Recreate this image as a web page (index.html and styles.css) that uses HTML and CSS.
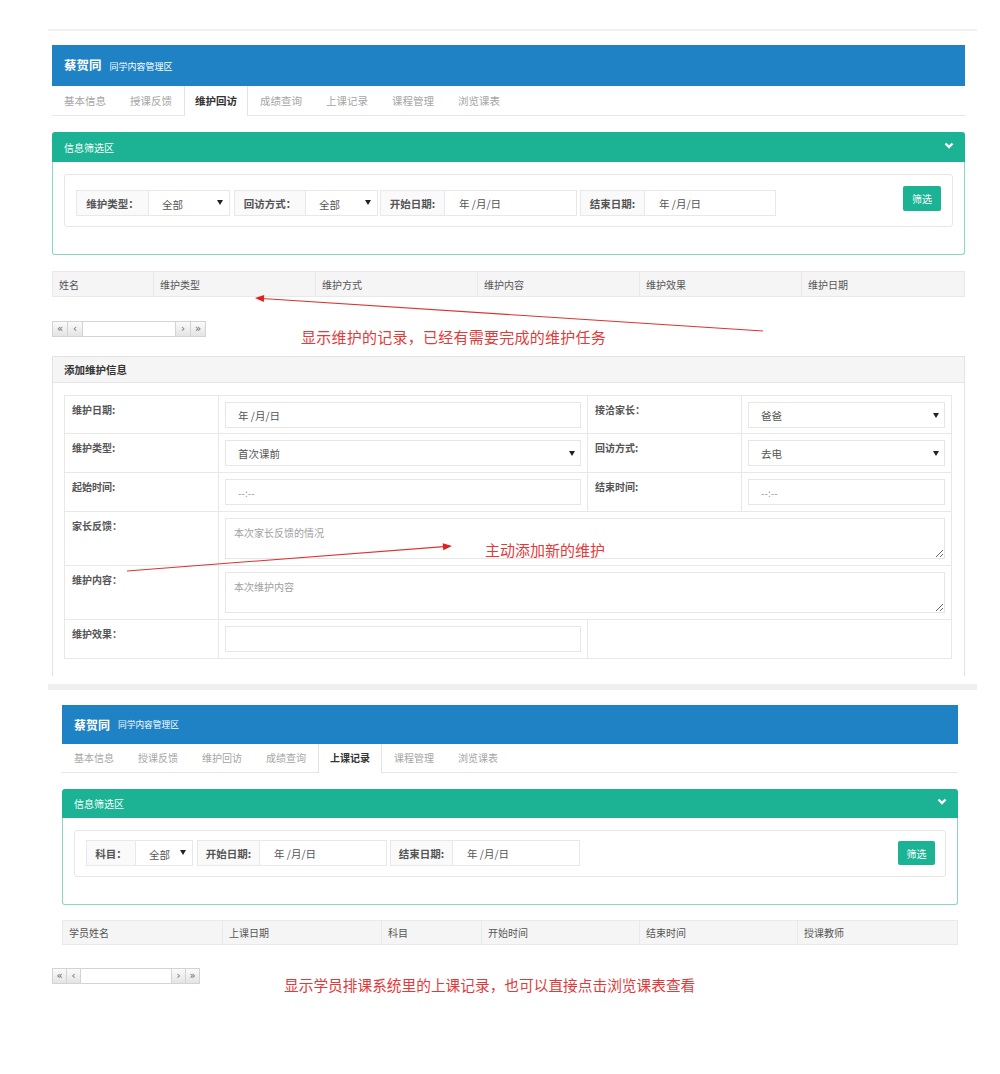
FILE: index.html
```html
<!DOCTYPE html>
<html lang="zh-CN">
<head>
<meta charset="utf-8">
<title>维护回访</title>
<link rel="stylesheet" href="styles.css">
</head>
<body>
<div class="rule"></div>

<section class="shot shot1">
  <div class="app-header"><span class="app-title">蔡贺同</span><span class="app-sub">同学内容管理区</span></div>
  <nav class="tabs">
    <span class="tab">基本信息</span>
    <span class="tab">授课反馈</span>
    <span class="tab active">维护回访</span>
    <span class="tab">成绩查询</span>
    <span class="tab">上课记录</span>
    <span class="tab">课程管理</span>
    <span class="tab">浏览课表</span>
  </nav>

  <div class="gpanel">
    <div class="gpanel-head"><span>信息筛选区</span>
      <svg class="chev" width="10" height="7" viewBox="0 0 10 7"><polyline points="1.5,1.5 5,5 8.5,1.5" fill="none" stroke="#fff" stroke-width="2.4"/></svg>
    </div>
    <div class="gpanel-body">
      <div class="fbox">
        <div class="fgroups">
          <div class="fgroup"><div class="flabel w73">维护类型：</div><div class="fctrl sel w81"><span>全部</span><svg class="tri" width="6" height="5" viewBox="0 0 6 5"><polygon points="0,0 6,0 3,5" fill="#222"/></svg></div></div>
          <div class="fgroup ml4"><div class="flabel w72">回访方式：</div><div class="fctrl sel w72"><span>全部</span><svg class="tri" width="6" height="5" viewBox="0 0 6 5"><polygon points="0,0 6,0 3,5" fill="#222"/></svg></div></div>
          <div class="fgroup ml2"><div class="flabel w65">开始日期:</div><div class="fctrl date w132">年 /月/日</div></div>
          <div class="fgroup ml3"><div class="flabel w65">结束日期:</div><div class="fctrl date w131">年 /月/日</div></div>
        </div>
        <button class="btn-green b1">筛选</button>
      </div>
    </div>
  </div>

  <div class="thead t1">
    <div>姓名</div><div>维护类型</div><div>维护方式</div><div>维护内容</div><div>维护效果</div><div>维护日期</div>
  </div>

  <div class="pager p1">
    <span class="pg">«</span><span class="pg">‹</span><span class="pg-mid"></span><span class="pg">›</span><span class="pg">»</span>
  </div>

  <div class="apanel">
    <div class="apanel-head">添加维护信息</div>
    <div class="apanel-body">
      <div class="ftable">
        <div class="fl">维护日期:</div>
        <div class="fc"><div class="field">年 /月/日</div></div>
        <div class="fl">接洽家长：</div>
        <div class="fc"><div class="field sel2"><span>爸爸</span><svg width="6" height="5" viewBox="0 0 6 5"><polygon points="0,0 6,0 3,5" fill="#222"/></svg></div></div>

        <div class="fl">维护类型:</div>
        <div class="fc"><div class="field sel2"><span>首次课前</span><svg width="6" height="5" viewBox="0 0 6 5"><polygon points="0,0 6,0 3,5" fill="#222"/></svg></div></div>
        <div class="fl">回访方式:</div>
        <div class="fc"><div class="field sel2"><span>去电</span><svg width="6" height="5" viewBox="0 0 6 5"><polygon points="0,0 6,0 3,5" fill="#222"/></svg></div></div>

        <div class="fl">起始时间:</div>
        <div class="fc"><div class="field time">--:--</div></div>
        <div class="fl">结束时间:</div>
        <div class="fc"><div class="field time">--:--</div></div>

        <div class="fl">家长反馈：</div>
        <div class="fc span3"><textarea class="ta" readonly placeholder="本次家长反馈的情况"></textarea></div>

        <div class="fl">维护内容：</div>
        <div class="fc span3"><textarea class="ta" readonly placeholder="本次维护内容"></textarea></div>

        <div class="fl">维护效果：</div>
        <div class="fc"><div class="field"></div></div>
        <div class="fc span2"></div>
      </div>
    </div>
  </div>
</section>

<div class="band"></div>

<section class="shot shot2">
  <div class="app-header h2"><span class="app-title">蔡贺同</span><span class="app-sub">同学内容管理区</span></div>
  <nav class="tabs tabs2">
    <span class="tab">基本信息</span>
    <span class="tab">授课反馈</span>
    <span class="tab">维护回访</span>
    <span class="tab">成绩查询</span>
    <span class="tab active">上课记录</span>
    <span class="tab">课程管理</span>
    <span class="tab">浏览课表</span>
  </nav>

  <div class="gpanel gp2">
    <div class="gpanel-head"><span>信息筛选区</span>
      <svg class="chev" width="10" height="7" viewBox="0 0 10 7"><polyline points="1.5,1.5 5,5 8.5,1.5" fill="none" stroke="#fff" stroke-width="2.4"/></svg>
    </div>
    <div class="gpanel-body">
      <div class="fbox fbox2">
        <div class="fgroups">
          <div class="fgroup"><div class="flabel w50">科目：</div><div class="fctrl sel w57"><span>全部</span><svg class="tri" width="6" height="5" viewBox="0 0 6 5"><polygon points="0,0 6,0 3,5" fill="#222"/></svg></div></div>
          <div class="fgroup ml4"><div class="flabel w63">开始日期:</div><div class="fctrl date w127">年 /月/日</div></div>
          <div class="fgroup ml3"><div class="flabel w63">结束日期:</div><div class="fctrl date w127">年 /月/日</div></div>
        </div>
        <button class="btn-green b2">筛选</button>
      </div>
    </div>
  </div>

  <div class="thead t2">
    <div>学员姓名</div><div>上课日期</div><div>科目</div><div>开始时间</div><div>结束时间</div><div>授课教师</div>
  </div>

  <div class="pager p2">
    <span class="pg">«</span><span class="pg">‹</span><span class="pg-mid"></span><span class="pg">›</span><span class="pg">»</span>
  </div>
</section>

<svg class="arrows" width="1000" height="1074" viewBox="0 0 1000 1074">
  <line x1="763" y1="331" x2="262" y2="298.5" stroke="#d9342f" stroke-width="1.1"/>
  <polygon points="255,298 264.2,295.1 263.8,302.1" fill="#e02020"/>
  <line x1="127" y1="571" x2="444" y2="546.6" stroke="#d9342f" stroke-width="1.1"/>
  <polygon points="452,546 443.3,550.2 442.7,543.2" fill="#e02020"/>
</svg>
<div class="note n1">显示维护的记录，已经有需要完成的维护任务</div>
<div class="note n2">主动添加新的维护</div>
<div class="note n3">显示学员排课系统里的上课记录，也可以直接点击浏览课表查看</div>
</body>
</html>
```

FILE: styles.css
```css
* { box-sizing: border-box; }

html, body {
  margin: 0;
  padding: 0;
}

body {
  position: relative;
  width: 1000px;
  height: 1074px;
  overflow: hidden;
  background: #fff;
  font-family: "Noto Sans CJK SC", "Noto Sans", sans-serif;
  color: #555;
}

.rule {
  margin: 29px 23px 0 48px;
  height: 2px;
  background: #f1f1f1;
}

.shot1 {
  margin: 14px 35px 0 52px;
}

.shot2 {
  margin: 15px 42px 0 62px;
}

/* header */
.app-header {
  height: 41px;
  background: #1e82c5;
  display: flex;
  align-items: center;
  padding-left: 12px;
  gap: 8px;
}
.app-header.h2 {
  height: 39px;
}
.app-title {
  color: #fff;
  font-weight: bold;
  font-size: 12.5px;
  line-height: 1;
}
.app-sub {
  color: #fff;
  font-size: 9px;
  line-height: 1;
  padding-top: 1px;
}
.h2 .app-title { font-size: 12px; }
.h2 .app-sub { font-size: 8.7px; }

/* tabs */
.tabs {
  display: flex;
  height: 30px;
  border-bottom: 1px solid #e6e6e6;
}
.tab {
  padding: 0 12px;
  font-size: 10.5px;
  line-height: 29px;
  color: #a5a5a5;
  white-space: nowrap;
}
.tab.active {
  color: #333;
  font-weight: bold;
  background: #fff;
  border-left: 1px solid #e3e3e3;
  border-right: 1px solid #e3e3e3;
  height: 30px;
  margin-bottom: -1px;
  padding: 0 10px;
}
.tabs2 {
  height: 29px;
}
.tabs2 .tab {
  font-size: 10px;
  line-height: 28px;
  padding: 0 12px;
}
.tabs2 .tab.active {
  height: 29px;
  padding: 0 11px;
}

/* green filter panel */
.gpanel {
  margin-top: 16px;
}
.gpanel-head {
  height: 30px;
  background: #1bb394;
  border-radius: 3px 3px 0 0;
  display: flex;
  align-items: center;
  justify-content: space-between;
  padding: 0 12px;
  color: #fff;
  font-size: 10px;
}
.gp2 .gpanel-head {
  height: 29px;
}
.chev {
  margin-right: -1px;
  margin-top: -4px;
}
.gpanel-body {
  border: 1px solid #8ad6c5;
  border-top: none;
  border-radius: 0 0 3px 3px;
  padding: 12px 11px 27px;
}
.fbox {
  border: 1px solid #e6e6e6;
  border-radius: 3px;
  padding: 15px 11px 10px;
  display: flex;
  justify-content: space-between;
  align-items: flex-start;
}
.fgroups {
  display: flex;
}
.fgroup {
  display: flex;
  height: 26px;
}
.ml2 { margin-left: 2px; }
.ml3 { margin-left: 3px; }
.ml4 { margin-left: 4px; }

.flabel {
  border: 1px solid #e8e8e8;
  background: #fafafa;
  font-weight: bold;
  font-size: 10.5px;
  color: #555;
  display: flex;
  align-items: center;
  justify-content: center;
  white-space: nowrap;
}
.fctrl {
  border: 1px solid #e8e8e8;
  border-left: none;
  background: #fff;
  display: flex;
  align-items: center;
  font-size: 10.5px;
  color: #555;
  white-space: nowrap;
}
.fctrl.sel {
  justify-content: space-between;
  padding: 2px 6px 0 13px;
}
.fctrl.sel .tri { margin-top: -3px; }
.fctrl.date {
  padding: 1px 0 0 14px;
}

.w50 { width: 50px; }
.w57 { width: 57px; }
.w63 { width: 63px; }
.w65 { width: 65px; }
.w72 { width: 72px; }
.w73 { width: 73px; }
.w81 { width: 81px; }
.w127 { width: 127px; }
.w131 { width: 131px; }
.w132 { width: 132px; }

.btn-green {
  border: none;
  background: #1bb394;
  color: #fff;
  font-family: inherit;
  font-size: 10px;
  border-radius: 2px;
  padding: 0;
}
.b1 {
  width: 38px;
  height: 25px;
  margin-top: -4px;
}
.fbox2 {
  padding: 9px 10px 10px 11px;
}
.b2 {
  width: 37px;
  height: 24px;
  margin-top: 1px;
}

/* table header */
.thead {
  display: grid;
  background: #f5f5f5;
  border: 1px solid #e9e9e9;
  font-size: 10px;
  color: #555;
}
.thead > div {
  padding-left: 6px;
  display: flex;
  align-items: center;
  white-space: nowrap;
}
.thead > div + div {
  border-left: 1px solid #e9e9e9;
}
.t1 {
  margin-top: 16px;
  height: 26px;
  grid-template-columns: 100px 162px 162px 162px 162px 1fr;
}
.t2 {
  margin-top: 15px;
  height: 25px;
  grid-template-columns: 159px 159px 100px 158px 158px 1fr;
}

/* pager */
.pager {
  display: flex;
  height: 16px;
}
.p1 {
  margin-top: 24px;
  width: 154px;
}
.p2 {
  margin-top: 23px;
  margin-left: -10px;
  width: 148px;
}
.pg {
  width: 16px;
  flex: none;
  border: 1px solid #d3d3d3;
  background: linear-gradient(#fbfbfb, #e4e4e4);
  color: #666;
  font-size: 10px;
  line-height: 13px;
  text-align: center;
  font-family: "DejaVu Sans", sans-serif;
}
.pg + .pg,
.pg-mid + .pg {
  margin-left: -1px;
}
.p2 .pg { width: 15px; }
.pg-mid {
  flex: 1;
  border-top: 1px solid #d3d3d3;
  border-bottom: 1px solid #d3d3d3;
  background: #fff;
}

/* add panel */
.apanel {
  margin-top: 19px;
  border: 1px solid #e3e3e3;
  border-bottom: none;
}
.apanel-head {
  height: 26px;
  background: #f5f5f5;
  border-bottom: 1px solid #e6e6e6;
  padding-left: 11px;
  display: flex;
  align-items: center;
  font-size: 10.5px;
  font-weight: bold;
  color: #333;
}
.apanel-body {
  padding: 12px 12px 17px 11px;
}
.ftable {
  display: grid;
  grid-template-columns: 154px 369px 154px 210px;
  grid-template-rows: 38px 39px 39px 54px 54px 39px;
  width: 888px;
  border-top: 1px solid #e8e8e8;
  border-left: 1px solid #e8e8e8;
}
.fl,
.fc {
  border-right: 1px solid #e8e8e8;
  border-bottom: 1px solid #e8e8e8;
}
.fl {
  padding: 6px 7px 0;
  font-size: 10px;
  font-weight: bold;
  color: #555;
  white-space: nowrap;
}
.fc {
  padding: 6px 6px 0 6px;
}
.span3 { grid-column: span 3; }
.span2 { grid-column: span 2; }

.field {
  height: 26px;
  border: 1px solid #e6e6e6;
  background: #fff;
  padding: 1px 12px 0 12px;
  display: flex;
  align-items: center;
  font-size: 10.5px;
  color: #555;
}
.field.sel2 {
  justify-content: space-between;
  padding-right: 5px;
}
.field.time {
  color: #999;
  font-size: 10px;
}
.ta {
  display: block;
  width: 100%;
  height: 41px;
  border: 1px solid #e6e6e6;
  padding: 6px 8px;
  font-family: inherit;
  font-size: 10px;
  color: #555;
  margin: 0;
  outline: none;
}
.ta::placeholder {
  color: #a0a0a0;
}

.band {
  margin: 8px 23px 0 48px;
  height: 6px;
  background: #efefef;
}

/* annotations overlaid on the screenshots */
.arrows {
  position: absolute;
  left: 0;
  top: 0;
  pointer-events: none;
}
.note {
  position: absolute;
  color: #e23a3a;
  font-size: 15px;
  line-height: 18px;
  white-space: nowrap;
}
.n1 {
  left: 301px;
  top: 328px;
  letter-spacing: 0.25px;
}
.n2 {
  left: 485px;
  top: 541px;
}
.n3 {
  left: 284px;
  top: 976px;
  font-size: 14.7px;
}
```
